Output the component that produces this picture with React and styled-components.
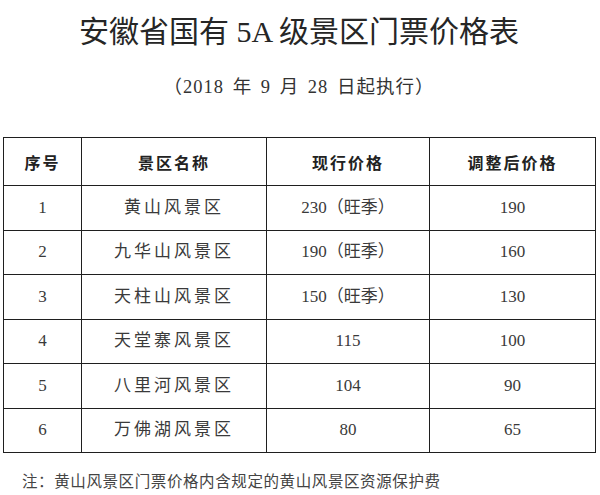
import React from "react";
import styled, { createGlobalStyle } from "styled-components";

const GlobalStyle = createGlobalStyle`
  body {
    margin: 0;
    background: #ffffff;
  }
`;

const Page = styled.div`
  width: 600px;
  height: 495px;
  padding: 0 5px 0 3px;
  box-sizing: border-box;
  font-family: "Liberation Serif", "Noto Sans CJK SC", serif;
  color: #2a2a2a;
`;

const Title = styled.h1`
  margin: 0;
  padding-top: 15px;
  height: 52px;
  line-height: 34px;
  font-size: 30px;
  font-weight: normal;
  text-align: center;
  color: #262626;
`;

const Subtitle = styled.div`
  height: 70px;
  line-height: 40px;
  font-size: 18.5px;
  letter-spacing: 1px;
  text-align: center;
  color: #333;
  word-spacing: 3px;
`;

const Table = styled.table`
  width: 592px;
  border-collapse: collapse;
  table-layout: fixed;
`;

const Th = styled.th`
  height: 47px;
  padding: 0;
  line-height: 20px;
  border: 1.5px solid #1f1f1f;
  font-size: 16px;
  font-weight: 700;
  font-family: "Noto Sans CJK SC", sans-serif;
  color: #222;
  letter-spacing: 2px;
`;

const Td = styled.td`
  height: 43.5px;
  padding: 0;
  line-height: 20px;
  border: 1.5px solid #1f1f1f;
  text-align: center;
  font-size: 17px;
  color: #3a3a3a;
  letter-spacing: ${(p) => (p.$wide ? "3px" : "0")};
`;

const Note = styled.div`
  margin-top: 19px;
  padding-left: 19px;
  line-height: 20px;
  font-size: 15.5px;
  letter-spacing: 0.6px;
  color: #444;
`;

const rows = [
  ["1", "黄山风景区", "230（旺季）", "190"],
  ["2", "九华山风景区", "190（旺季）", "160"],
  ["3", "天柱山风景区", "150（旺季）", "130"],
  ["4", "天堂寨风景区", "115", "100"],
  ["5", "八里河风景区", "104", "90"],
  ["6", "万佛湖风景区", "80", "65"],
];

export default function App() {
  return (
    <Page>
      <GlobalStyle />
      <Title>安徽省国有 5A 级景区门票价格表</Title>
      <Subtitle>（2018 年 9 月 28 日起执行）</Subtitle>
      <Table>
        <colgroup>
          <col style={{ width: 78 }} />
          <col style={{ width: 185 }} />
          <col style={{ width: 163 }} />
          <col style={{ width: 166 }} />
        </colgroup>
        <thead>
          <tr>
            <Th>序号</Th>
            <Th>景区名称</Th>
            <Th>现行价格</Th>
            <Th>调整后价格</Th>
          </tr>
        </thead>
        <tbody>
          {rows.map((r) => (
            <tr key={r[0]}>
              <Td>{r[0]}</Td>
              <Td $wide>{r[1]}</Td>
              <Td>{r[2]}</Td>
              <Td>{r[3]}</Td>
            </tr>
          ))}
        </tbody>
      </Table>
      <Note>注：黄山风景区门票价格内含规定的黄山风景区资源保护费</Note>
    </Page>
  );
}
